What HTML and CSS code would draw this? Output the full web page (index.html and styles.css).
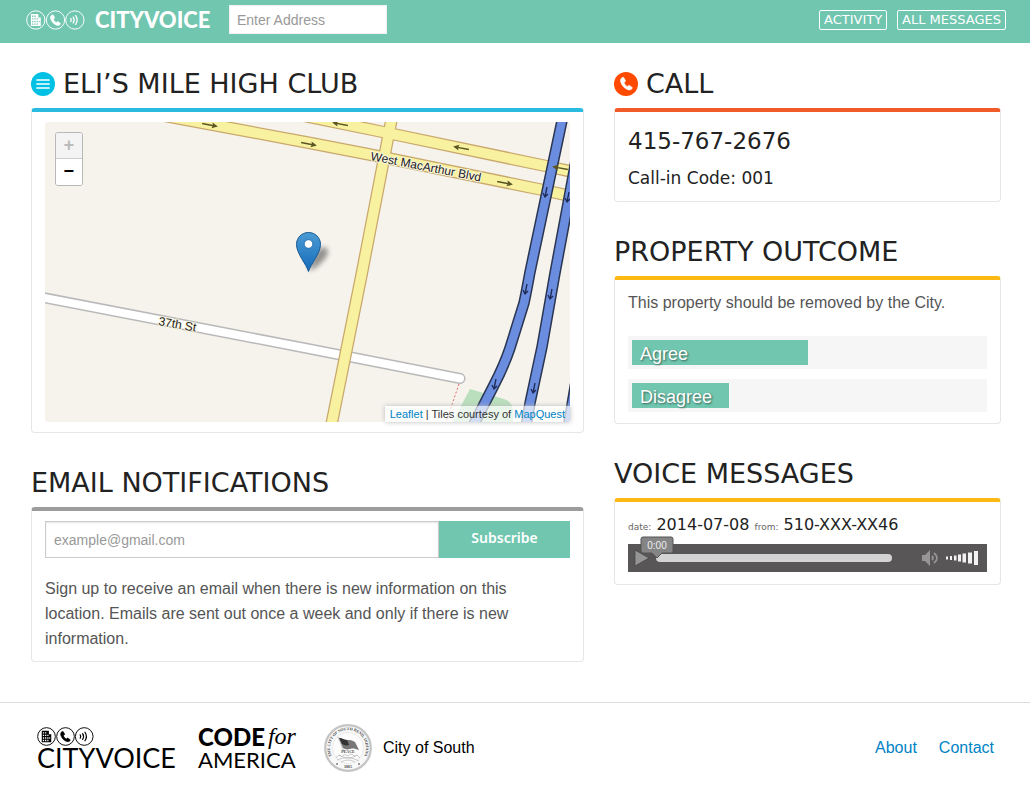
FILE: index.html
```html
<!DOCTYPE html>
<html lang="en">
<head>
<meta charset="utf-8">
<meta name="viewport" content="width=device-width, initial-scale=1">
<title>CityVoice – Eli's Mile High Club</title>
<link rel="stylesheet" href="styles.css">
</head>
<body>
<svg class="defs" width="0" height="0" aria-hidden="true">
  <symbol id="phone" viewBox="0 0 12 12">
    <path d="M2.600 1.200C1.300 2 .9 3.400 1.500 5.100c.9 2.700 3 4.900 5.500 5.800 1.400.5 2.600.2 3.500-.9.3-.4.2-.8-.2-1.100L8.500 7.700c-.4-.3-.9-.2-1.100.1l-.6.7C5.500 7.800 4.400 6.500 4 5.100l.8-.5c.4-.2.5-.6.3-1.100L4 1.500c-.3-.5-.8-.6-1.400-.3z" fill="currentColor" stroke="currentColor" stroke-width=".5"/>
  </symbol>
  <symbol id="trio" viewBox="0 0 60 20">
    <g fill="none" stroke="currentColor" stroke-width="1">
      <circle cx="10" cy="10" r="9.300"/><circle cx="30" cy="10" r="9.300"/><circle cx="49.700" cy="10" r="9.300"/>
    </g>
    <path fill="currentColor" fill-rule="evenodd" d="M5 4h7.500v3.500H15V16H5zM6.200 5.500v1.400h1.300V5.500zm2.300 0v1.400h1.300V5.500zM6.200 8.200v1.400h1.300V8.200zm2.300 0v1.400h1.300V8.200zm2.300 0v1.400h1.300V8.200zM6.200 10.900v1.400h1.300v-1.400zm2.300 0v1.400h1.300v-1.400zm2.300 0v1.400h1.300v-1.400zm2.100 0v1.400h1v-1.400zM6.200 13.500v1.400h1.300v-1.400zm2.300 0v1.400h1.300v-1.400zm2.300 0v1.400h1.300v-1.400z"/>
    <use href="#phone" x="23.500" y="3.500" width="13" height="13"/>
    <path d="M45.500 8.300q1 1.700 0 3.400M48 7q2 3 0 6M50.500 5.500q3 4.500 0 9" fill="none" stroke="currentColor" stroke-width="1.300" stroke-linecap="round"/>
  </symbol>
  <symbol id="arrow" viewBox="-9 -4 18 8">
    <path d="M-8 0H5" stroke="currentColor" stroke-width="1.500"/><path d="M8 0 2-3 3 0 2 3z" fill="currentColor"/>
  </symbol>
</svg>

<header class="topbar">
  <a class="brand" href="#">
    <svg class="brand-icons" aria-hidden="true"><use href="#trio"/></svg>
    <span>CITYVOICE</span>
  </a>
  <input class="address" type="text" placeholder="Enter Address" aria-label="Enter Address">
  <nav class="topnav">
    <a href="#">ACTIVITY</a>
    <a href="#">ALL MESSAGES</a>
  </nav>
</header>

<main class="columns">
  <div class="column">
    <section>
      <h2 class="title">
        <svg class="title-icon" viewBox="0 0 24 24" aria-hidden="true"><circle cx="12" cy="12" r="12" fill="#00c0e4"/><path d="M6 8h12M6 12h12M6 16h12" stroke="#fff" stroke-width="1.700" stroke-linecap="round"/></svg>
        ELI’S MILE HIGH CLUB
      </h2>
      <div class="panel panel-blue">
        <div class="map">
          <svg class="map-canvas" viewBox="45 122 525 300" preserveAspectRatio="xMidYMid slice" role="img" aria-label="Street map">
            <defs>
              <linearGradient id="pin" x1="0" y1="0" x2="0" y2="1"><stop offset="0" stop-color="#4a9bd4"/><stop offset="1" stop-color="#166bb9"/></linearGradient>
              <filter id="soft" x="-50%" y="-50%" width="200%" height="200%"><feGaussianBlur stdDeviation="2.500"/></filter>
            </defs>
            <rect x="45" y="122" width="525" height="300" fill="#f6f3ed"/>
            <path d="M470 389l34 10q9 3 9 12v12h-61z" fill="#b9dfbd"/>
            <path d="M459 384l-13 38" stroke="#e06a6a" stroke-width="1" stroke-dasharray="2 2"/>
            <g fill="none" stroke-linecap="round">
              <path d="M40 297L310 349l150 29.500" stroke="#b9b9b9" stroke-width="11"/>
              <path d="M40 297L310 349l150 29.500" stroke="#fff" stroke-width="8"/>
            </g>
            <g fill="none" stroke="#c9a86c" stroke-width="12.500">
              <path d="M160 115l38 7 112 21 57 11 176 36 32 7"/><path d="M290 113l93 19 163 34 32 7"/><path d="M392 117l-30.500 158L331 427"/>
            </g>
            <g fill="none" stroke="#f7f1a0" stroke-width="10">
              <path d="M160 115l38 7 112 21 57 11 176 36 32 7"/><path d="M290 113l93 19 163 34 32 7"/><path d="M392 117l-30.500 158L331 427"/>
            </g>
            <g fill="none" stroke="#2a3552" stroke-width="11.500">
              <path d="M563 116L530 272q-4 22-6 31l-14 45q-6 18-17 39l-20 39"/><path d="M577 155l-22 118-13 74-12 56-4 24"/><path d="M578 370l-10 58"/>
            </g>
            <g fill="none" stroke="#6a8de0" stroke-width="8.500">
              <path d="M563 116L530 272q-4 22-6 31l-14 45q-6 18-17 39l-20 39"/><path d="M577 155l-22 118-13 74-12 56-4 24"/><path d="M578 370l-10 58"/>
            </g>
            <g color="#5b5423">
              <use href="#arrow" x="-9" y="-4" width="18" height="8" transform="translate(210 125) rotate(11)"/>
              <use href="#arrow" x="-9" y="-4" width="18" height="8" transform="translate(309 144) rotate(11)"/>
              <use href="#arrow" x="-9" y="-4" width="18" height="8" transform="translate(505 183) rotate(11)"/>
              <use href="#arrow" x="-9" y="-4" width="18" height="8" transform="translate(340 124) rotate(190)"/>
              <use href="#arrow" x="-9" y="-4" width="18" height="8" transform="translate(461 148) rotate(190)"/>
              <use href="#arrow" x="-9" y="-4" width="18" height="8" transform="translate(560 168) rotate(190)"/>
            </g>
            <g fill="none" stroke="#1d2a55" stroke-width="1.300">
              <path id="down" d="M547 187l-2 10m-2-4 2 4 3-3"/>
              <use href="#down" x="22" y="5"/><use href="#down" x="-20" y="97"/><use href="#down" x="5" y="102"/><use href="#down" x="-51" y="192"/><use href="#down" x="-12" y="196"/>
            </g>
            <g class="street-name">
              <text transform="translate(370 160) rotate(11)">West MacArthur Blvd</text>
              <text transform="translate(158 325) rotate(10)">37th St</text>
            </g>
            <path d="M309 271c2-9 5-19 12-23 6-3 9 3 5 9-4 6-11 12-17 14z" fill="#000" opacity=".4" filter="url(#soft)"/>
            <path d="M308.500 271.500c-2-7-12-18-12-27 0-7 5.300-12 12-12s12 5 12 12c0 9-10 20-12 27z" fill="url(#pin)" stroke="#1a5a94" stroke-width="1"/>
            <circle cx="308.500" cy="244" r="4.300" fill="#fff" stroke="#1f62a0" stroke-width=".8"/>
          </svg>
          <div class="zoom">
            <button type="button" aria-label="Zoom in" disabled>+</button>
            <button type="button" aria-label="Zoom out">−</button>
          </div>
          <p class="credit"><a href="#">Leaflet</a> | Tiles courtesy of <a href="#">MapQuest</a></p>
        </div>
      </div>
    </section>

    <section>
      <h2 class="title">EMAIL NOTIFICATIONS</h2>
      <div class="panel panel-grey">
        <form class="signup">
          <input type="email" placeholder="example@gmail.com" aria-label="Email address">
          <button type="button">Subscribe</button>
        </form>
        <p class="copy">Sign up to receive an email when there is new information on this location. Emails are sent out once a week and only if there is new information.</p>
      </div>
    </section>
  </div>

  <div class="column">
    <section>
      <h2 class="title">
        <svg class="title-icon" viewBox="0 0 24 24" aria-hidden="true"><circle cx="12" cy="12" r="12" fill="#ff4a00"/><use href="#phone" x="5" y="4" width="15" height="15" color="#fff"/></svg>
        CALL
      </h2>
      <div class="panel panel-orange">
        <p class="phone-number">415-767-2676</p>
        <p class="call-code">Call-in Code: 001</p>
      </div>
    </section>

    <section>
      <h2 class="title">PROPERTY OUTCOME</h2>
      <div class="panel panel-yellow">
        <p class="question">This property should be removed by the City.</p>
        <div class="bar"><div class="fill" style="width: 50%">Agree</div></div>
        <div class="bar"><div class="fill" style="width: 27.500%">Disagree</div></div>
      </div>
    </section>

    <section>
      <h2 class="title">VOICE MESSAGES</h2>
      <div class="panel panel-yellow">
        <p class="message"><small>date:</small> 2014-07-08 <small>from:</small> 510-XXX-XX46</p>
        <div class="player">
          <button class="play" type="button" aria-label="Play">
            <svg width="16" height="18" viewBox="0 0 16 18"><path d="M1 1l14 8L1 17z" fill="#959595" stroke="#434343" stroke-width=".7"/></svg>
          </button>
          <input class="seek" type="range" min="0" max="100" value="0" aria-label="Seek">
          <button class="mute" type="button" aria-label="Mute">
            <svg width="18" height="16" viewBox="0 0 18 16"><path d="M0 5h3l5-5v16l-5-5H0z" fill="#969696"/><path d="M10 6q2 2 0 4" fill="none" stroke="#969696" stroke-width="1.800"/><path d="M12 3q6 5 0 10" fill="none" stroke="#969696" stroke-width="1.800"/></svg>
          </button>
          <svg class="volume" viewBox="0 0 33 16" role="img" aria-label="Volume"><path fill="#f2f2f2" d="M0 6.500h2v3H0zM4 6h2v4H4zM8 5.500h2.500v5H8zM12 4.500h3v7h-3zM16.500 3.500h3.500v9h-3.500zM22 2.500h4v11h-4zM28 1h4v14h-4z"/></svg>
          <svg class="time" viewBox="0 0 34 22" role="img" aria-label="0:00">
            <path d="M3 1h28q2 0 2 2v12q0 2-2 2H22l-5 5-5-5H3q-2 0-2-2V3q0-2 2-2z" fill="#858585" stroke="#555" stroke-width="1"/>
            <text x="17" y="13" text-anchor="middle">0:00</text>
          </svg>
        </div>
      </div>
    </section>
  </div>
</main>

<footer class="footer">
  <a class="footer-brand" href="#">
    <svg class="footer-icons" aria-hidden="true"><use href="#trio"/></svg>
    <span>CITYVOICE</span>
  </a>
  <a class="cfa" href="#"><span class="cfa-top"><b>CODE</b> <i>for</i></span><span>AMERICA</span></a>
  <svg class="seal" viewBox="0 0 48 48" role="img" aria-label="Seal of the City of South Bend, Indiana">
    <circle cx="24" cy="24" r="22.800" fill="#f8f8f8" stroke="#c4c4c4" stroke-width="2.200"/>
    <circle cx="24" cy="24" r="15.500" fill="#fcfcfc" stroke="#ddd" stroke-width=".6"/>
    <path id="ring" d="M11 36.500A18 18 0 1 1 37 36.500" fill="none"/>
    <text class="seal-text"><textPath href="#ring" startOffset="50%" text-anchor="middle">THE CITY OF SOUTH BEND, INDIANA</textPath></text>
    <path d="M15 14c3 0 5 2 9 2s5 1 7 2l4 8c-4-1-5-2-9-1s-5 0-7-1z" fill="#777"/>
    <path d="M15 14c3 0 5 2 8 2l2 5c-3 1-5 0-7-1z" fill="#333"/>
    <path d="M14 13l6 15" stroke="#999" stroke-width=".6"/>
    <path d="M12 34q3-5 6-1 2-4 6-1 3-4 6 0 4-2 6 2M13 36q11-5 22 1M15 31q9 6 18 0M17 38q7-4 14 0" fill="none" stroke="#bbb" stroke-width=".8"/>
    <text class="seal-text" x="24" y="29" text-anchor="middle">PEACE</text>
    <text class="seal-text" x="24" y="44" text-anchor="middle">1865</text>
    <circle cx="13" cy="40" r=".7"/><circle cx="35" cy="40" r=".7"/>
  </svg>
  <span class="city">City of South</span>
  <nav class="footer-nav">
    <a href="#">About</a>
    <a href="#">Contact</a>
  </nav>
</footer>
</body>
</html>
```

FILE: styles.css
```css
* { box-sizing: border-box; }

body {
  margin: 0;
  background: #fff;
  color: #222;
  font: 16px/26px "Liberation Sans", Arial, sans-serif;
}

a { color: #0083c5; text-decoration: none; }
p { margin: 0; }
button, input { font-family: inherit; border-radius: 0; margin: 0; }
svg { flex: none; }
.defs { position: absolute; }

.topbar {
  display: flex;
  align-items: center;
  height: 43px;
  padding: 0 24px 4px 26px;
  background: #70c6af;
}

.brand {
  display: flex;
  align-items: center;
  gap: 10px;
  width: 203px;
  color: #fff;
  font: 900 22px/30px Lato, sans-serif;
}
.brand-icons { width: 59px; height: 20px; }

.address {
  width: 158px;
  height: 29px;
  padding: 0 7px;
  border: 1px solid #f2f2f2;
  background: #fff;
  font-size: 14px;
}
::placeholder { color: #999; opacity: 1; }

.topnav { display: flex; gap: 10px; margin-left: auto; }
.topnav a {
  padding: 0 4px;
  border: 1px solid #fff;
  border-radius: 2px;
  color: #fff;
  font: 13px/18px "DejaVu Sans", sans-serif;
}

.columns {
  display: grid;
  grid-template-columns: 553fr 387fr;
  gap: 30px;
  padding: 23px 29px 40px 31px;
}
.column { display: flex; flex-direction: column; gap: 32px; min-width: 0; }

.title {
  display: flex;
  align-items: center;
  gap: 8px;
  margin: 0 0 6px;
  font: 27px/36px "DejaVu Sans", sans-serif;
}
.title-icon { width: 24px; height: 24px; }

.panel {
  padding: 10px 13px;
  border: 1px solid #e6e6e6;
  border-top: 4px solid;
  border-radius: 4px;
}
.panel-blue { border-top-color: #29bce0; }
.panel-grey { border-top-color: #9c9c9c; }
.panel-orange { border-top-color: #f15a29; }
.panel-yellow { border-top-color: #fdb913; }

.map { position: relative; height: 300px; }
.map-canvas { display: block; width: 100%; height: 100%; border-radius: 3px; }
.street-name {
  font: 12px "Liberation Sans", Arial, sans-serif;
  fill: #222;
  stroke: #f8f5df;
  stroke-width: 2px;
  paint-order: stroke;
}
.zoom {
  position: absolute;
  top: 10px;
  left: 10px;
  display: grid;
  border: 1px solid #b8b8b8;
  border-radius: 3px;
  overflow: hidden;
}
.zoom button {
  width: 26px;
  height: 26px;
  padding: 0;
  border: 0;
  background: #fff;
  color: #000;
  font: bold 18px/26px "Liberation Mono", monospace;
}
.zoom button:disabled { border-bottom: 1px solid #ccc; background: #f4f4f4; color: #bbb; }
.credit {
  position: absolute;
  right: 0;
  bottom: 0;
  padding: 0 5px;
  background: rgba(255, 255, 255, .7);
  box-shadow: 0 0 5px #bbb;
  color: #333;
  font-size: 11px;
  line-height: 16px;
}

.signup { display: flex; }
.signup input {
  flex: 1;
  min-width: 0;
  height: 37px;
  padding: 0 8px;
  border: 1px solid #ccc;
  box-shadow: inset 0 1px 2px rgba(0, 0, 0, .1);
  font-size: 14px;
}
.signup button {
  width: 131px;
  padding: 0 0 4px;
  border: 0;
  background: #70c6af;
  color: #fff;
  font: 600 14px/20px "Noto Sans", sans-serif;
}
.copy { padding: 18px 0 0; color: #555; line-height: 25px; }

.phone-number { padding-top: 2px; font: 23px/34px "DejaVu Sans", sans-serif; }
.call-code { padding-top: 7px; font: 17px/26px "DejaVu Sans", sans-serif; }

.question { margin-bottom: 20px; color: #555; }
.bar { height: 33px; padding: 4px; background: #f6f6f6; }
.bar + .bar { margin: 10px 0 1px; }
.fill {
  height: 25px;
  padding-left: 8px;
  background: #70c6af;
  color: #fff;
  font-size: 18px;
  line-height: 28px;
  text-shadow: 1px 1px 2px rgba(0, 0, 0, .5);
}

.message { margin-bottom: 6px; font: 16px/26px "DejaVu Sans", sans-serif; }
.message small { color: #666; font-size: 9px; line-height: 9px; }

.player {
  position: relative;
  display: flex;
  align-items: center;
  height: 28px;
  margin-bottom: 2px;
  padding: 0 8px 0 6px;
  background: #585657;
}
.player button { display: flex; padding: 0; border: 0; background: none; }
.seek {
  flex: 1;
  min-width: 0;
  height: 8px;
  margin: 0 30px 0 6px;
  border-radius: 4px;
  background: #d3d3d3;
  appearance: none;
}
.seek::-webkit-slider-thumb { appearance: none; width: 8px; height: 8px; }
.volume { width: 33px; height: 16px; margin-left: 6px; }
.time { position: absolute; left: 12px; top: -8px; width: 34px; height: 22px; }
.time text { fill: #eee; font: 10px "Liberation Sans", Arial, sans-serif; }

.footer {
  display: flex;
  align-items: center;
  padding: 21px 36px 14px 37px;
  border-top: 1px solid #ddd;
  color: #000;
}
.footer-brand {
  display: grid;
  width: 161px;
  color: #000;
  font: 27px/24px Lato, sans-serif;
}
.footer-icons { width: 57px; height: 19px; }
.cfa {
  display: grid;
  width: 126px;
  color: #000;
  font: 22px/23px Lato, sans-serif;
}
.cfa-top { display: flex; gap: 3px; }
.cfa b { font-size: 24px; font-weight: 900; }
.cfa i { font-family: "Liberation Serif", serif; font-size: 24px; }
.seal { width: 48px; height: 48px; margin-right: 11px; }
.seal-text { font: bold 4px "Liberation Serif", serif; fill: #444; }
.footer-nav { display: flex; gap: 22px; margin-left: auto; }
```
